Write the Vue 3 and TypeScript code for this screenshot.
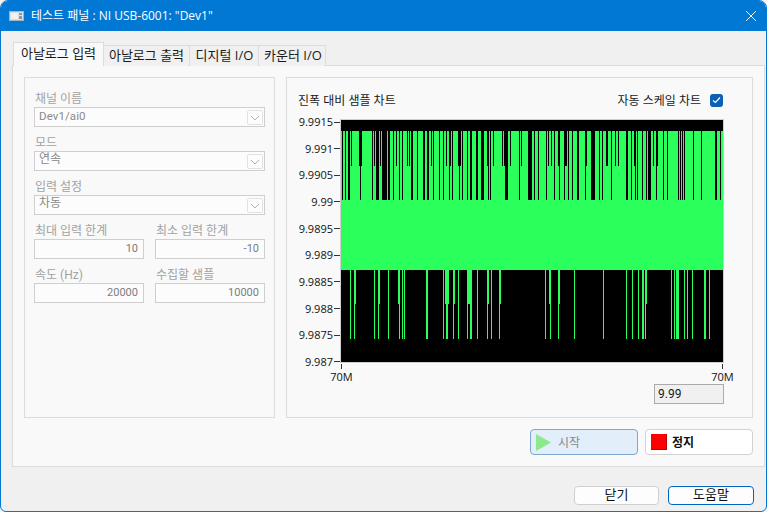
<script setup lang="ts">
type Bar = { x: number; w: number; y: number; h: number }

const PLOT_LEFT = 341
const UNIT = 3

const build = (origin: number, spans: number[][], y: number, h: number): Bar[] =>
  spans.map(([a, b]) => ({
    x: origin - PLOT_LEFT + a / UNIT,
    w: (b - a) / UNIT,
    y,
    h,
  }))

const blackLong: Bar[] = [
  ...build(341, [[3,6],[12,15],[21,27],[57,60],[93,96],[105,114],[123,138],[141,147],[156,159],[174,177],[183,186],[210,216],[228,231],[246,252],[258,264],[276,279],[294,297],[306,309],[324,327],[333,336],[354,357],[363,366],[378,381]], 11, 69),
  ...build(470, [[0,6],[18,24],[33,42],[54,57],[60,63],[105,114],[147,150],[174,186],[192,195],[204,207],[228,231],[252,255],[267,270],[282,285],[294,297],[306,309],[321,327],[345,348],[363,375],[387,390]], 11, 69),
  ...build(598, [[12,15],[39,42],[84,90],[99,102],[111,114],[117,120],[132,135],[144,147],[150,159],[174,177],[195,198],[207,210],[240,243],[246,249],[252,255],[258,261],[285,288],[309,312],[351,357],[366,369]], 11, 69),
]

const blackShort: Bar[] = [
  ...build(341, [[30,33],[54,63],[99,102],[117,120],[165,168],[198,201],[204,207],[270,273],[315,318],[327,330],[351,360]], 11, 35),
  ...build(470, [[51,57],[69,72],[96,99],[102,105],[120,123],[153,156],[234,237],[243,246],[264,267],[282,291],[348,351]], 11, 35),
  ...build(598, [[24,30],[51,54],[60,63],[108,114],[165,168],[177,180]], 11, 35),
]

const greenLong: Bar[] = [
  ...build(341, [[27,30],[39,42],[99,102],[111,114],[141,144],[174,177],[183,186],[189,192],[255,261],[306,309],[315,321],[336,339],[351,354],[378,381],[387,393],[408,411],[438,441],[450,453],[474,477]], 150, 69),
  ...build(530, [[45,48],[60,63],[84,87],[132,135],[219,222],[288,291],[306,309],[324,327],[336,342],[345,348],[423,426],[432,435],[438,447],[462,465],[471,474],[486,489],[522,528],[537,540]], 150, 69),
]

const greenShort: Bar[] = [
  ...build(341, [[39,45],[111,117],[171,177],[312,324],[336,342],[378,393],[438,444],[474,480]], 150, 34),
  ...build(530, [[57,63],[84,90],[345,351]], 150, 34),
]

const blackBars = [...blackLong, ...blackShort]
const greenBars = [...greenLong, ...greenShort]

const tabs = ['아날로그 입력', '아날로그 출력', '디지털 I/O', '카운터 I/O']
const yLabels = ['9.9915', '9.991', '9.9905', '9.99', '9.9895', '9.989', '9.9885', '9.988', '9.9875', '9.987']
const combos = [
  { label: '채널 이름', value: 'Dev1/ai0', latin: true },
  { label: '모드', value: '연속', latin: false },
  { label: '입력 설정', value: '차동', latin: false },
]
const numberRows = [
  [{ label: '최대 입력 한계', value: '10' }, { label: '최소 입력 한계', value: '-10' }],
  [{ label: '속도 (Hz)', value: '20000' }, { label: '수집할 샘플', value: '10000' }],
]
</script>

<template>
  <div class="window">
    <header class="titlebar">
      <svg class="app-icon" width="15" height="10" viewBox="0 0 15 10">
        <rect x="0.5" y="0.5" width="14" height="9" fill="#d8dde2" stroke="#a9b4bd" />
        <rect x="2" y="2" width="7" height="6" fill="#eef1f3" />
        <rect x="10" y="2" width="3" height="2" fill="#8d98a2" />
        <rect x="10" y="5" width="3" height="3" fill="#8d98a2" />
      </svg>
      <span class="title">테스트 패널 : NI USB-6001: "Dev1"</span>
      <svg class="close-icon" width="10" height="10" viewBox="0 0 10 10">
        <path d="M0 0 L10 10 M10 0 L0 10" stroke="#fff" stroke-width="1" fill="none" />
      </svg>
    </header>

    <nav class="tabs">
      <div v-for="(tab, i) in tabs" :key="tab" class="tab" :class="[`tab-${i}`, { active: i === 0 }]">{{ tab }}</div>
    </nav>

    <section class="panel">
      <div class="groups">
        <div class="group settings">
          <div v-for="c in combos" :key="c.label" class="field">
            <label class="field-label">{{ c.label }}</label>
            <div class="combo" :class="{ latin: c.latin }">
              <span>{{ c.value }}</span>
              <span class="combo-btn">
                <svg width="10" height="6" viewBox="0 0 10 6">
                  <path d="M1 1 L5 5 L9 1" stroke="#b0b0b0" stroke-width="1" fill="none" />
                </svg>
              </span>
            </div>
          </div>
          <div v-for="(row, r) in numberRows" :key="r" class="num-row">
            <div v-for="f in row" :key="f.label" class="field">
              <label class="field-label">{{ f.label }}</label>
              <div class="num-input">{{ f.value }}</div>
            </div>
          </div>
        </div>

        <div class="group chart-group">
          <div class="chart-head">
            <span>진폭 대비 샘플 차트</span>
            <span class="auto">
              자동 스케일 차트
              <span class="check">
                <svg width="9" height="8" viewBox="0 0 9 8">
                  <path d="M1 4.5 L3.5 6.5 L8 1.5" stroke="#fff" stroke-width="1.2" fill="none" />
                </svg>
              </span>
            </span>
          </div>
          <div class="chart-body">
            <div class="y-axis">
              <div v-for="l in yLabels" :key="l" class="y-row">
                <span>{{ l }}</span>
                <i class="y-tick"></i>
              </div>
            </div>
            <div class="plot-col">
              <svg class="plot" width="382" height="242" viewBox="0 0 382 242" shape-rendering="crispEdges">
                <rect width="382" height="242" fill="#000" />
                <rect y="11" width="382" height="139" fill="#2aff5c" />
                <rect v-for="(b, i) in blackBars" :key="'k' + i" :x="b.x" :y="b.y" :width="b.w" :height="b.h" fill="#000" />
                <rect v-for="(b, i) in greenBars" :key="'g' + i" :x="b.x" :y="b.y" :width="b.w" :height="b.h" fill="#2aff5c" />
              </svg>
              <div class="x-axis">
                <div class="x-item"><i class="x-tick"></i><span>70M</span></div>
                <div class="x-item"><i class="x-tick"></i><span>70M</span></div>
              </div>
              <div class="readout">9.99</div>
            </div>
          </div>
        </div>
      </div>

      <div class="actions">
        <button class="action start">
          <svg width="15" height="17" viewBox="0 0 15 17">
            <path d="M0 0 L15 8.5 L0 17 Z" fill="#8ee98e" />
          </svg>
          <span>시작</span>
        </button>
        <button class="action stop">
          <svg width="16" height="16" viewBox="0 0 16 16">
            <rect width="16" height="16" fill="#c00000" />
            <rect width="15" height="15" fill="#ff0000" />
          </svg>
          <span>정지</span>
        </button>
      </div>
    </section>

    <footer class="footer">
      <button class="foot-btn close">닫기</button>
      <button class="foot-btn help">도움말</button>
    </footer>
  </div>
</template>

<style>
html, body {
  margin: 0;
  background: #f3f3f3;
}
</style>

<style scoped>
.window {
  box-sizing: border-box;
  width: 767px;
  height: 512px;
  border: 1px solid #0078d4;
  border-radius: 8px 8px 6px 6px;
  background: #f0f0f0;
  overflow: hidden;
  display: flex;
  flex-direction: column;
  font-family: "Roboto", "Noto Sans CJK KR", sans-serif;
  font-size: 12px;
  color: #1a1a1a;
}
.titlebar {
  height: 30px;
  flex: none;
  background: #0078d4;
  color: #fff;
  display: flex;
  align-items: center;
  padding: 0 10px 0 8px;
}
.app-icon { margin-right: 7px; }
.title {
  flex: 1;
  font-family: "Open Sans", "Noto Sans CJK KR", sans-serif;
  font-size: 12px;
  padding-bottom: 2px;
}
.tabs {
  display: flex;
  align-items: flex-end;
  height: 35px;
  padding-left: 12px;
  flex: none;
  position: relative;
  z-index: 1;
  margin-bottom: -1px;
}
.tab {
  box-sizing: border-box;
  height: 21px;
  border: 1px solid #dcdcdc;
  border-bottom: none;
  background: #f0f0f0;
  margin-left: -1px;
  text-align: center;
  font-family: "Open Sans", "Noto Sans CJK KR", sans-serif;
  font-size: 13px;
  line-height: 19px;
  white-space: nowrap;
}
.tab-0 { width: 91px; margin-left: 0; }
.tab-1 { width: 87px; }
.tab-2 { width: 70px; padding-left: 1px; }
.tab-3 { width: 68px; padding-left: 2px; }
.tab.active {
  height: 24px;
  background: #f9f9f9;
  line-height: 20px;
}
.panel {
  box-sizing: border-box;
  width: 753px;
  height: 402px;
  margin-left: 11px;
  flex: none;
  border: 1px solid #dcdcdc;
  background: #f9f9f9;
  padding: 11px 11px 10px;
  display: flex;
  flex-direction: column;
}
.groups {
  display: flex;
  gap: 11px;
}
.group {
  box-sizing: border-box;
  height: 341px;
  border: 1px solid #dcdcdc;
}
.settings {
  width: 251px;
  padding: 12px 9px;
  display: flex;
  flex-direction: column;
  gap: 7px;
}
.field-label {
  display: block;
  height: 14px;
  line-height: 18px;
  margin-bottom: 3px;
  padding-left: 1px;
  color: #a2a2a2;
  font-size: 12px;
}
.combo {
  box-sizing: border-box;
  height: 20px;
  border: 1px solid #cfcfcf;
  background: #fcfcfc;
  display: flex;
  justify-content: space-between;
  padding: 0 1px 0 4px;
  line-height: 14px;
  color: #8a8a8a;
}
.combo.latin {
  line-height: 17px;
  font-size: 11.5px;
  letter-spacing: 0.1px;
}
.combo-btn {
  box-sizing: border-box;
  width: 16px;
  height: 15px;
  margin-top: 2px;
  border: 1px solid #e2e2e2;
  border-radius: 2px;
  background: #fdfdfd;
  display: flex;
  align-items: center;
  justify-content: center;
}
.num-row {
  display: flex;
  gap: 11px;
}
.num-row .field { flex: 1; min-width: 0; }
.num-input {
  box-sizing: border-box;
  height: 20px;
  border: 1px solid #cfcfcf;
  background: #fcfcfc;
  text-align: right;
  padding-right: 5px;
  line-height: 18px;
  font-size: 11px;
  color: #7d7d7d;
}
.chart-group {
  width: 467px;
  padding: 12px 29px 0 11px;
}
.chart-head {
  display: flex;
  justify-content: space-between;
  align-items: center;
  height: 20px;
  font-family: "Open Sans", "Noto Sans CJK KR", sans-serif;
  font-size: 12px;
  margin-bottom: 5px;
}
.auto {
  display: flex;
  align-items: center;
  gap: 9px;
}
.check {
  box-sizing: border-box;
  width: 13px;
  height: 13px;
  border-radius: 3px;
  background: #0a60b6;
  display: flex;
  align-items: center;
  justify-content: center;
}
.chart-body {
  display: flex;
}
.y-axis {
  width: 43px;
  height: 254px;
  flex: none;
  display: flex;
  flex-direction: column;
  justify-content: space-between;
}
.y-row {
  height: 14px;
  line-height: 14px;
  display: flex;
  justify-content: flex-end;
  align-items: center;
  gap: 1px;
  padding-right: 1px;
  font-family: "Open Sans", sans-serif;
  font-size: 11px;
  color: #111;
}
.y-tick {
  width: 6px;
  height: 1px;
  background: #333;
}
.plot-col {
  margin-top: 5px;
  width: 382px;
  display: flex;
  flex-direction: column;
}
.plot {
  display: block;
  outline: 1px solid #cfcfcf;
  box-shadow: -1px -1px 0 #555;
}
.x-axis {
  display: flex;
  justify-content: space-between;
  margin: 2px -10px 0;
}
.x-item {
  display: flex;
  flex-direction: column;
  align-items: center;
  width: 21px;
  font-family: "Open Sans", sans-serif;
  font-size: 11px;
  line-height: 15px;
  color: #111;
}
.x-tick {
  width: 1px;
  height: 5px;
  background: #333;
}
.readout {
  box-sizing: border-box;
  align-self: flex-end;
  width: 70px;
  height: 20px;
  margin: 0 -1px 0 0;
  border: 1px solid #ababab;
  background: #f0f0f0;
  padding-left: 3px;
  line-height: 18px;
  font-size: 12px;
}
.actions {
  display: flex;
  justify-content: flex-end;
  gap: 7px;
  margin-top: 11px;
}
.action {
  box-sizing: border-box;
  width: 108px;
  height: 26px;
  border-radius: 4px;
  border: 1px solid #d2d2d2;
  background: #fff;
  display: flex;
  align-items: center;
  gap: 7px;
  padding: 0 5px;
  font: inherit;
  font-size: 12px;
  color: #111;
}
.action span { padding-bottom: 2px; }
.start {
  background: #e2eef9;
  border-color: #7fa7cf;
  color: #888;
}
.stop { gap: 5px; }
.stop span { font-weight: 700; }
.footer {
  display: flex;
  justify-content: flex-end;
  gap: 9px;
  padding: 19px 12px 0;
}
.foot-btn {
  box-sizing: border-box;
  height: 19px;
  width: 85px;
  border-radius: 4px;
  border: 1px solid #d0d0d0;
  background: #fdfdfd;
  font: inherit;
  font-size: 13px;
  line-height: 15px;
  padding: 0 0 2px;
  color: #111;
}
.help {
  width: 86px;
  border-color: #0067c0;
}
</style>
